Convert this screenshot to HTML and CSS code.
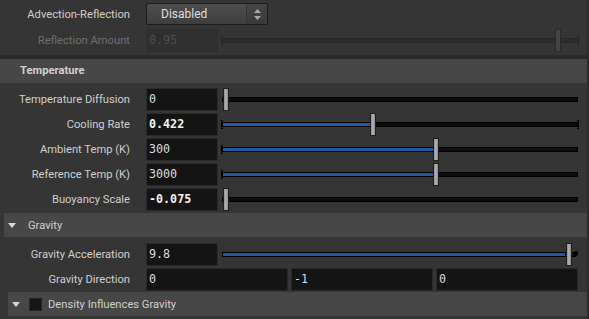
FILE: index.html
```html
<!DOCTYPE html>
<html lang="en">
<head>
  <meta charset="UTF-8">
  <title>Smoke Solver - Parameters</title>
  <link rel="stylesheet" href="styles.css">
</head>
<body>
  <div class="panel">
    <div class="row top-row">
      <span class="label">Advection-Reflection</span>
      <div class="menu">
        <span class="menu-text">Disabled</span>
        <span class="menu-arrows">
          <svg width="7" height="11" viewBox="0 0 7 11"><path d="M3.5 0 L7 4 L0 4 Z M0 7 L7 7 L3.5 11 Z" fill="#a8a8a8"/></svg>
        </span>
      </div>
    </div>
    <div class="row disabled">
      <span class="label">Reflection Amount</span>
      <div class="field">0.95</div>
      <div class="slider">
        <div class="track lock-l lock-r"></div>
        <div class="handle" style="left:333px"></div>
      </div>
    </div>

    <div class="divider"></div>
    <div class="tab">Temperature</div>

    <div class="section">
      <div class="row">
        <span class="label">Temperature Diffusion</span>
        <div class="field">0</div>
        <div class="slider">
          <div class="track"></div>
          <div class="handle" style="left:1px"></div>
        </div>
      </div>
      <div class="row">
        <span class="label">Cooling Rate</span>
        <div class="field bold">0.422</div>
        <div class="slider">
          <div class="track lock-l lock-r"><div class="fill" style="width:148px"></div></div>
          <div class="handle" style="left:148px"></div>
        </div>
      </div>
      <div class="row">
        <span class="label">Ambient Temp (K)</span>
        <div class="field">300</div>
        <div class="slider">
          <div class="track lock-l"><div class="fill" style="width:211px"></div></div>
          <div class="handle" style="left:211px"></div>
        </div>
      </div>
      <div class="row">
        <span class="label">Reference Temp (K)</span>
        <div class="field">3000</div>
        <div class="slider">
          <div class="track lock-l"><div class="fill" style="width:211px"></div></div>
          <div class="handle" style="left:211px"></div>
        </div>
      </div>
      <div class="row">
        <span class="label">Buoyancy Scale</span>
        <div class="field bold">-0.075</div>
        <div class="slider">
          <div class="track"></div>
          <div class="handle" style="left:1px"></div>
        </div>
      </div>
    </div>

    <div class="folder gravity">
      <svg class="arrow" width="8" height="5" viewBox="0 0 8 5"><path d="M0 0 L8 0 L4 5 Z" fill="#d8d8d8"/></svg>
      <span>Gravity</span>
    </div>

    <div class="section gravity-body">
      <div class="row">
        <span class="label">Gravity Acceleration</span>
        <div class="field">9.8</div>
        <div class="slider">
          <div class="track knob-r"><div class="fill" style="width:342px"></div></div>
          <div class="handle" style="left:344px"></div>
        </div>
      </div>
      <div class="row">
        <span class="label">Gravity Direction</span>
        <div class="vector">
          <div class="field">0</div>
          <div class="field">-1</div>
          <div class="field">0</div>
        </div>
      </div>
    </div>

    <div class="folder density">
      <svg class="arrow" width="8" height="5" viewBox="0 0 8 5"><path d="M0 0 L8 0 L4 5 Z" fill="#d8d8d8"/></svg>
      <span class="check"></span>
      <span>Density Influences Gravity</span>
    </div>
  </div>
</body>
</html>
```

FILE: styles.css
```css
body {
  margin: 0;
  background: #2b2b2b;
  font-family: Roboto, "Noto Sans", sans-serif;
  font-size: 11.2px;
}
.panel {
  width: 587px;
  height: 319px;
  background: #353535;
  border-right: 2px solid #2b2b2b;
  overflow: hidden;
}
.row {
  display: flex;
  align-items: center;
  height: 25px;
  padding-right: 9px;
}
.top-row {
  height: 22px;
  margin-top: 3px;
  margin-bottom: 3px;
}
.label {
  flex: none;
  width: 130px;
  padding-right: 16px;
  text-align: right;
  white-space: nowrap;
  color: #cecece;
}
.field {
  flex: none;
  width: 72px;
  height: 23px;
  box-sizing: border-box;
  border: 1px solid #2a2a2a;
  background: #141414;
  padding-left: 2px;
  font-family: "DejaVu Sans Mono", monospace;
  font-size: 11.7px;
  line-height: 21px;
  color: #dcdcdc;
}
.field.bold {
  font-weight: bold;
  color: #f2f2f2;
}

/* menu */
.menu {
  display: flex;
  width: 122px;
  height: 22px;
  box-sizing: border-box;
  border: 1px solid #1c1c1c;
  border-radius: 2px;
  background: linear-gradient(#4e4e4e, #3e3e3e);
}
.menu-text {
  flex: 1;
  padding-left: 14px;
  line-height: 20px;
  font-size: 12px;
  color: #dedede;
}
.menu-arrows {
  display: flex;
  align-items: center;
  justify-content: center;
  width: 20px;
  border-left: 1px solid #333;
  background: linear-gradient(#464646, #3a3a3a);
}

/* sliders */
.slider {
  flex: 1;
  position: relative;
  display: flex;
  align-items: center;
  height: 23px;
  margin-left: 4px;
}
.track {
  flex: 1;
  position: relative;
  height: 5px;
  box-sizing: border-box;
  border: 1px solid #000;
  background: #0d0d0d;
}
.fill {
  position: absolute;
  left: 0;
  top: 0;
  bottom: 0;
  background: #1e5aa5;
}
.lock-l::before,
.lock-r::after {
  content: '';
  position: absolute;
  top: -3px;
  width: 1px;
  height: 7px;
  border: 1px solid #000;
}
.lock-l::before {
  left: -2px;
  border-right: none;
}
.lock-r::after {
  right: -2px;
  border-left: none;
}
.knob-r {
  margin-right: 2px;
}
.knob-r::after {
  content: '';
  position: absolute;
  right: -3px;
  top: -2px;
  width: 4px;
  height: 5px;
  border-radius: 2px;
  background: #000;
}
.handle {
  position: absolute;
  top: 0;
  width: 6px;
  height: 23px;
  box-sizing: border-box;
  border: 1px solid #1f1f1f;
  background: linear-gradient(to right, #8c8c8c, #b4b4b4 45%, #8a8a8a);
}

/* disabled row */
.disabled .label {
  color: #6e6e6e;
}
.disabled .field {
  background: #2f2f2f;
  border-color: #303030;
  color: #4f4f4f;
}
.disabled .track {
  border-color: #262626;
  background: #2c2c2c;
}
.disabled .lock-l::before,
.disabled .lock-r::after {
  border-color: #262626;
}
.disabled .handle {
  border-color: #2a2a2a;
  background: #454545;
}

/* folders */
.divider {
  height: 4px;
  margin-top: 2px;
  background: #2b2b2b;
}
.tab {
  height: 24px;
  padding-left: 20px;
  line-height: 24px;
  background: #474747;
  font-weight: bold;
  color: #d0d0d0;
}
.section {
  padding-top: 4px;
}
.folder {
  display: flex;
  align-items: center;
  height: 24px;
  background: #474747;
  color: #cfcfcf;
}
.gravity {
  margin-top: 1px;
  margin-left: 4px;
  padding-left: 4px;
  gap: 12px;
}
.gravity-body {
  padding-top: 5px;
}
.density {
  margin-left: 8px;
  padding-left: 4px;
}
.density .arrow {
  margin-right: 9px;
}
.check {
  width: 13px;
  height: 13px;
  box-sizing: border-box;
  border: 1px solid #252525;
  background: #161616;
  margin-right: 6px;
}
.vector {
  flex: 1;
  display: flex;
  gap: 3px;
}
.vector .field {
  flex: 1;
  width: auto;
}
```
